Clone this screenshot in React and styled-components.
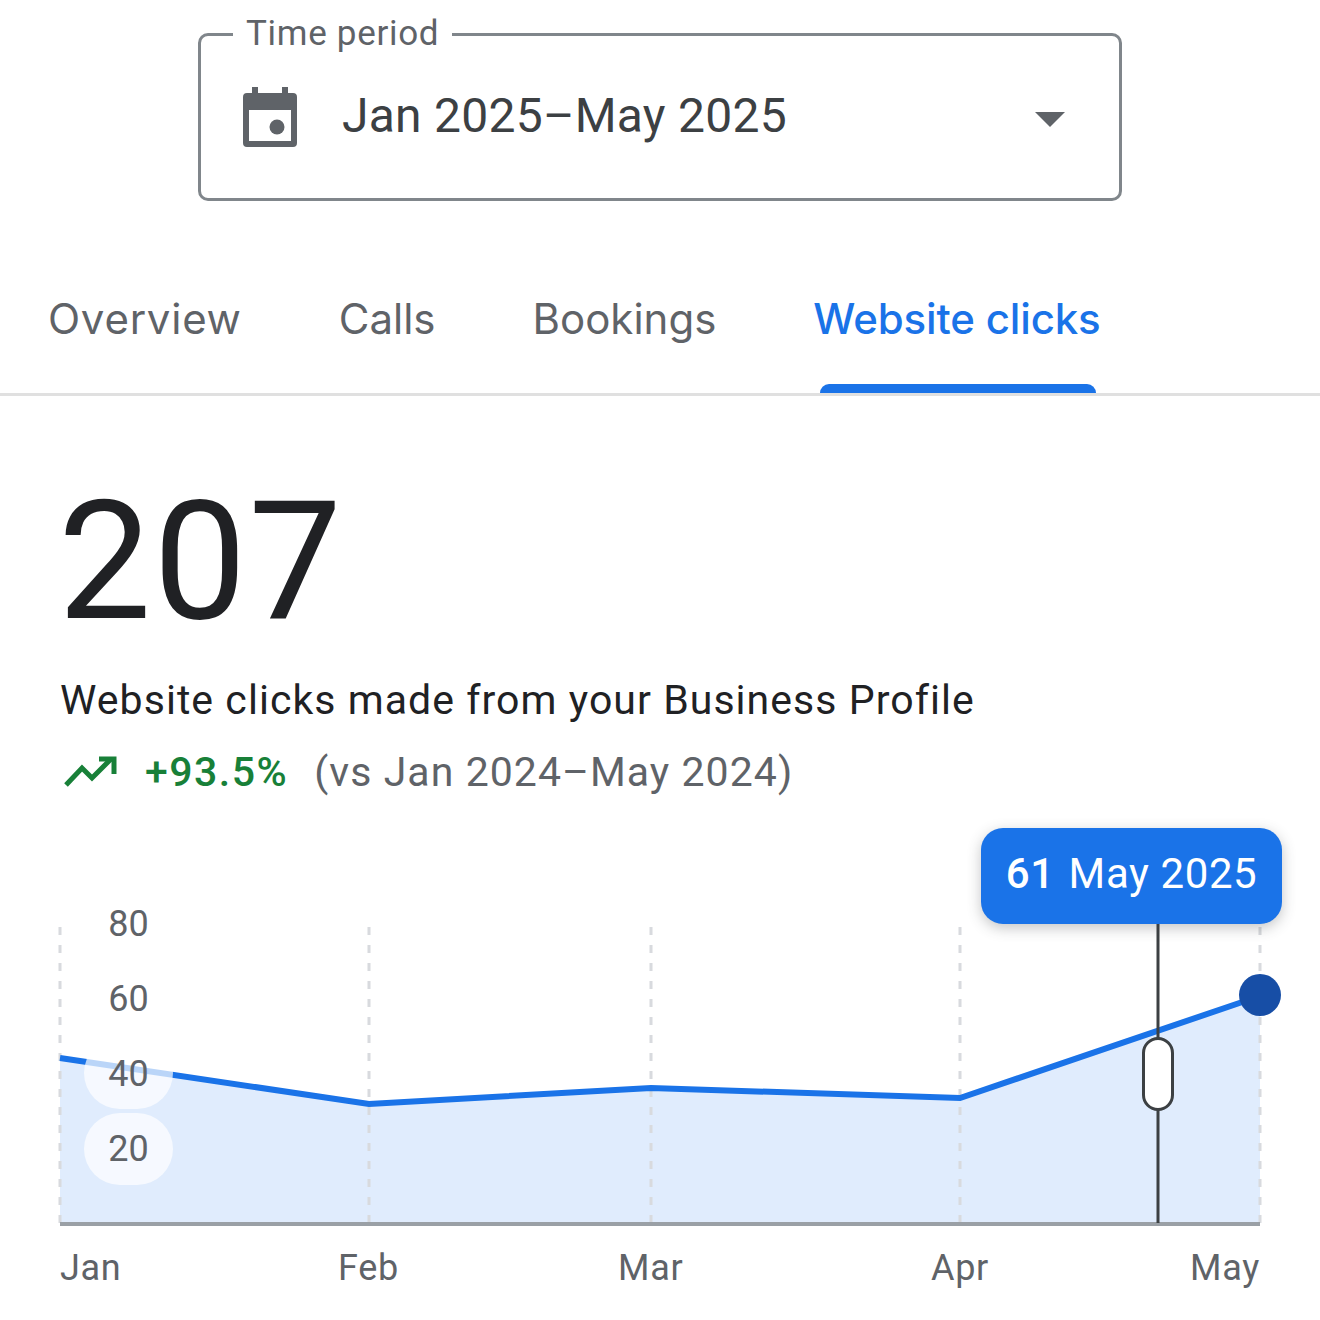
import React from 'react';
import styled, { createGlobalStyle } from 'styled-components';

const GlobalStyle = createGlobalStyle`
  html, body { margin: 0; padding: 0; background: #fff; }
  body { font-family: Roboto, "Liberation Sans", sans-serif; }
`;

const Page = styled.div`
  width: 1320px;
  height: 1320px;
  overflow: hidden;
  background: #fff;
`;

const PeriodWrap = styled.div`
  padding: 14px 198px 0;
`;

const PeriodField = styled.fieldset`
  margin: 0;
  padding: 0 54px 19px 42px;
  height: 187px;
  box-sizing: border-box;
  border: 3px solid #80868b;
  border-radius: 10px;
  display: flex;
  align-items: center;
`;

const PeriodLegend = styled.legend`
  margin-left: -10px;
  padding: 0 13px;
  font-size: 35px;
  line-height: 40px;
  letter-spacing: 0.7px;
  color: #5f6368;
`;

const PeriodValue = styled.div`
  flex: 1;
  margin: -2px 0 0 45px;
  font-size: 48px;
  letter-spacing: 0.25px;
  color: #3c4043;
`;

const Caret = styled.div`
  width: 0;
  height: 0;
  margin-top: 6px;
  border-left: 15px solid transparent;
  border-right: 15px solid transparent;
  border-top: 15px solid #5f6368;
`;

const Tabs = styled.div`
  display: flex;
  gap: 97px;
  margin-top: 60px;
  padding-left: 48px;
  height: 135px;
  box-sizing: border-box;
  border-bottom: 3px solid #e0e0e0;
`;

const Tab = styled.div`
  position: relative;
  padding-top: 33px;
  font-family: Inter, Roboto, sans-serif;
  font-size: 42px;
  line-height: 50px;
  letter-spacing: ${p => p.$spacing || 0}px;
  font-weight: ${p => (p.$active ? 500 : 400)};
  color: ${p => (p.$active ? '#1a73e8' : '#5f6368')};

  ${p => p.$active && `
    &::after {
      content: '';
      position: absolute;
      left: 7px;
      right: 5px;
      bottom: 0;
      height: 9px;
      background: #1a73e8;
      border-radius: 9px 9px 0 0;
    }
  `}
`;

const Summary = styled.section`
  padding: 78px 0 0 60px;
`;

const BigNumber = styled.div`
  margin-left: -2px;
  font-size: 166px;
  line-height: 176px;
  letter-spacing: 2px;
  color: #202124;
`;

const Caption = styled.div`
  margin-top: 26px;
  font-size: 41px;
  line-height: 48px;
  letter-spacing: 1.05px;
  color: #202124;
`;

const TrendRow = styled.div`
  display: flex;
  align-items: center;
  margin-top: 24px;
  font-size: 41px;
  line-height: 48px;
  letter-spacing: 1.05px;
`;

const TrendIcon = styled.svg`
  width: 54px;
  height: 34px;
  margin-left: 4px;
`;

const TrendValue = styled.span`
  margin-left: 27px;
  font-weight: 500;
  letter-spacing: 1.5px;
  color: #188038;
`;

const TrendNote = styled.span`
  margin-left: 26px;
  color: #5f6368;
`;

const Chart = styled.div`
  position: relative;
  height: 500px;
  margin-top: 29px;
`;

const ChartSvg = styled.svg`
  display: block;
  width: 1320px;
  height: 500px;
`;

const YLabel = styled.div`
  position: absolute;
  left: 84px;
  width: 89px;
  text-align: center;
  font-size: 36px;
  line-height: 42px;
  color: #5f6368;
`;

const YPill = styled.div`
  position: absolute;
  left: 84px;
  width: 89px;
  height: 72px;
  border-radius: 36px;
  background: rgba(255, 255, 255, 0.7);
`;

const XLabel = styled.div`
  position: absolute;
  top: 422px;
  font-size: 36px;
  line-height: 42px;
  letter-spacing: 0.7px;
  color: #5f6368;
`;

const Tooltip = styled.div`
  position: absolute;
  left: 981px;
  top: 3px;
  width: 301px;
  height: 96px;
  box-sizing: border-box;
  padding-bottom: 5px;
  border-radius: 22px;
  background: #1a73e8;
  box-shadow: 0 4px 14px rgba(60, 64, 67, 0.3);
  color: #fff;
  display: flex;
  align-items: center;
  justify-content: center;
  gap: 14px;
  font-size: 42px;
  letter-spacing: 0.6px;
`;

const TooltipValue = styled.span`
  font-weight: 500;
`;

const CalendarIcon = () => (
  <svg width="54" height="60" viewBox="0 0 54 60" fill="#5f6368">
    <path
      fillRule="evenodd"
      d="M9 0h6v6h24V0h6v6h5a4 4 0 0 1 4 4v46a4 4 0 0 1-4 4H4a4 4 0 0 1-4-4V10a4 4 0 0 1 4-4h5V0zM6 23v31h42V23H6z"
    />
    <circle cx="34" cy="40" r="7.5" />
  </svg>
);

// chart coordinates are relative to the chart box, which starts at y=825
const points = [
  [60, 233],
  [369, 279],
  [651, 263],
  [960, 273],
  [1260, 171],
];
const baseY = 398;
const line = points.map(p => p.join(',')).join(' ');
const area = `60,${baseY} ${line} 1260,${baseY}`;

const yTicks = [
  { label: '80', top: 78 },
  { label: '60', top: 153 },
  { label: '40', top: 228 },
  { label: '20', top: 303 },
];

const xTicks = [
  { label: 'Jan', left: 60 },
  { label: 'Feb', left: 338 },
  { label: 'Mar', left: 618 },
  { label: 'Apr', left: 931 },
  { label: 'May', left: 1190 },
];

function App() {
  return (
    <Page>
      <GlobalStyle />
      <PeriodWrap>
        <PeriodField>
          <PeriodLegend>Time period</PeriodLegend>
          <CalendarIcon />
          <PeriodValue>Jan 2025–May 2025</PeriodValue>
          <Caret />
        </PeriodField>
      </PeriodWrap>

      <Tabs>
        <Tab $spacing={0.75}>Overview</Tab>
        <Tab>Calls</Tab>
        <Tab>Bookings</Tab>
        <Tab $active $spacing={-0.15}>Website clicks</Tab>
      </Tabs>

      <Summary>
        <BigNumber>207</BigNumber>
        <Caption>Website clicks made from your Business Profile</Caption>
        <TrendRow>
          <TrendIcon viewBox="0 0 54 34" fill="none" stroke="#188038" strokeWidth="5">
            <path d="M2 30l16-17 10 10 19-19" />
            <path d="M35 4h15v15" />
          </TrendIcon>
          <TrendValue>+93.5%</TrendValue>
          <TrendNote>(vs Jan 2024–May 2024)</TrendNote>
        </TrendRow>
      </Summary>

      <Chart>
        <ChartSvg viewBox="0 0 1320 500">
          <polygon points={area} fill="#e0ecfd" />
          {points.map(([x]) => (
            <line key={x} x1={x} x2={x} y1="102" y2={baseY} stroke="#d8dade" strokeWidth="3" strokeDasharray="8 10" />
          ))}
          <line x1="60" x2="1260" y1={baseY + 1} y2={baseY + 1} stroke="#9aa0a6" strokeWidth="4" />
          <polyline points={line} fill="none" stroke="#1a73e8" strokeWidth="6" />
          <line x1="1158" x2="1158" y1="99" y2={baseY} stroke="#3c4043" strokeWidth="3" />
          <rect x="1143.5" y="213.5" width="29" height="71" rx="14.5" fill="#fff" stroke="#3c4043" strokeWidth="3" />
          <circle cx="1260" cy="170" r="21" fill="#174ea6" />
        </ChartSvg>
        <YPill style={{ top: 212 }} />
        <YPill style={{ top: 288 }} />
        {yTicks.map(t => (
          <YLabel key={t.label} style={{ top: t.top }}>{t.label}</YLabel>
        ))}
        {xTicks.map(t => (
          <XLabel key={t.label} style={{ left: t.left }}>{t.label}</XLabel>
        ))}
        <Tooltip>
          <TooltipValue>61</TooltipValue>
          <span>May 2025</span>
        </Tooltip>
      </Chart>
    </Page>
  );
}

export default App;
